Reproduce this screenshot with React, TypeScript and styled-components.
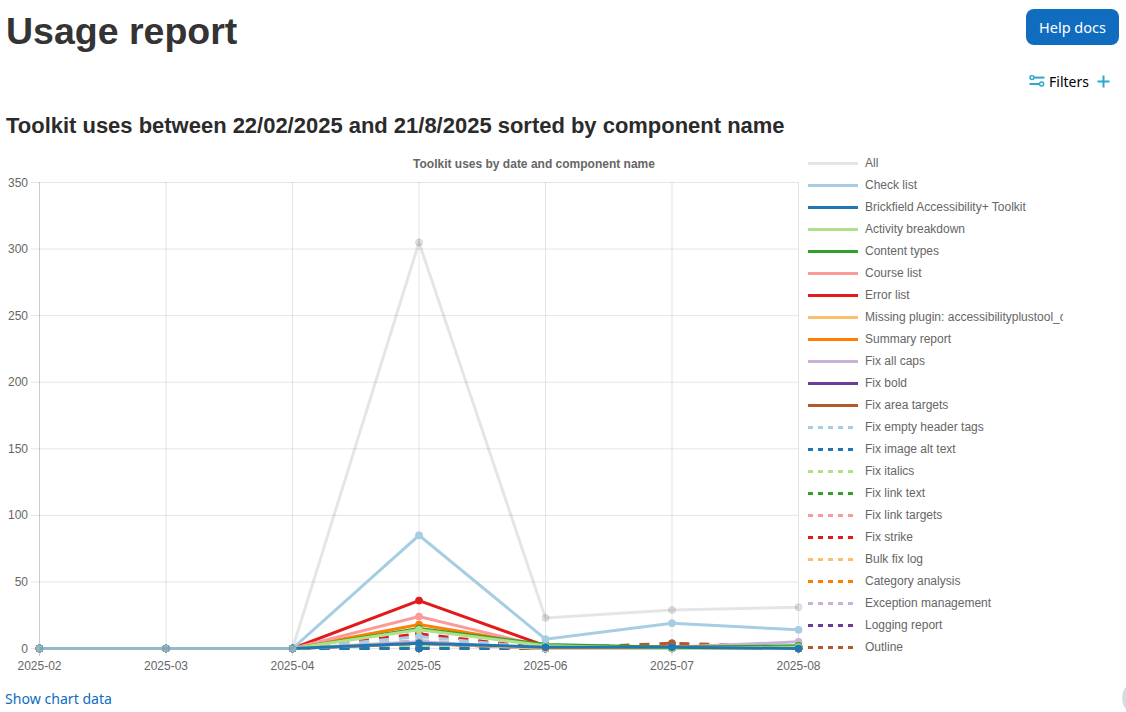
import { FC } from 'react'
import styled, { createGlobalStyle } from 'styled-components'

const GlobalStyle = createGlobalStyle`
html, body {
  margin: 0;
  padding: 0;
  background: #fff;
  overflow: hidden;
}
body {
  font-family: "Noto Sans", "Open Sans", sans-serif;
}
`

const Page = styled.main`
  height: 712px;
  padding: 9px 7px 0 6px;
  box-sizing: border-box;
`
const Header = styled.header`
  display: flex;
  justify-content: space-between;
  align-items: flex-start;
  height: 57px;
`
const Title = styled.h1`
  margin: 0;
  font: bold 37.5px/44px "Liberation Sans", Arial, sans-serif;
  color: #343434;
`
const HelpButton = styled.a`
  display: flex;
  align-items: center;
  justify-content: center;
  width: 93px;
  height: 36px;
  border-radius: 8px;
  background: #0f6cbf;
  color: #fff;
  font-size: 14.5px;
`
const FilterRow = styled.div`
  display: flex;
  justify-content: flex-end;
  align-items: center;
  height: 30px;
  padding-right: 9px;
  gap: 4px;
`
const FilterLabel = styled.span`
  font-size: 14px;
  color: #000;
  margin-right: 4px;
`
const Subtitle = styled.h2`
  margin: 15px 0 0;
  font: bold 21.98px/30px "Liberation Sans", Arial, sans-serif;
  color: #2b2b2b;
`
const Figure = styled.figure`
  margin: 11px 0 0 -6px;
  width: 1063px;
  display: grid;
  grid-template-columns: 803px 260px;
  grid-template-rows: 22px 510px;
`
const ChartTitle = styled.figcaption`
  grid-column: 1 / 3;
  grid-row: 1;
  padding-left: 5px;
  text-align: center;
  font: bold 12px/24px "Liberation Sans", Arial, sans-serif;
  color: #666;
`
const Plot = styled.svg`
  grid-column: 1;
  grid-row: 2;
  display: block;
  overflow: visible;
`
const Legend = styled.ul`
  grid-column: 2;
  grid-row: 1 / 3;
  list-style: none;
  margin: 0;
  padding: 0 0 0 5px;
  overflow: hidden;
`
const LegendItem = styled.li`
  display: flex;
  align-items: center;
  height: 22px;
  gap: 7px;
  white-space: nowrap;
  font: 12px/22px "Liberation Sans", Arial, sans-serif;
  color: #666;
`
const Swatch = styled.svg`
  flex: none;
  display: block;
  width: 50px;
  height: 3px;
  margin-top: 1px;
`
const DataLink = styled.a`
  display: block;
  margin-top: 4px;
  margin-left: -1px;
  font-size: 14.1px;
  line-height: 22px;
  color: #0f6cbf;
`
const HelpBubble = styled.div`
  position: fixed;
  left: 1122px;
  top: 680px;
  width: 36px;
  height: 36px;
  border-radius: 50%;
  background: #d8dce2;
`

type Series = { name: string; color: string; dashed?: boolean; data: number[] }

const series: Series[] = [
  { name: 'All', color: 'rgba(0,0,0,0.1)', data: [0, 0, 0, 305, 23, 29, 31] },
  { name: 'Check list', color: '#a6cee3', data: [0, 0, 0, 85, 7, 19, 14] },
  { name: 'Brickfield Accessibility+ Toolkit', color: '#1f78b4', data: [0, 0, 0, 4, 1, 1, 0] },
  { name: 'Activity breakdown', color: '#b2df8a', data: [0, 0, 0, 14, 2, 0, 1] },
  { name: 'Content types', color: '#33a02c', data: [0, 0, 0, 15, 3, 1, 2] },
  { name: 'Course list', color: '#fb9a99', data: [0, 0, 0, 24, 1, 1, 1] },
  { name: 'Error list', color: '#e31a1c', data: [0, 0, 0, 36, 2, 1, 1] },
  { name: 'Missing plugin: accessibilityplustool_checklist', color: '#fdbf6f', data: [0, 0, 0, 4, 0, 0, 0] },
  { name: 'Summary report', color: '#ff7f00', data: [0, 0, 0, 18, 2, 1, 1] },
  { name: 'Fix all caps', color: '#cab2d6', data: [0, 0, 0, 5, 0, 1, 5] },
  { name: 'Fix bold', color: '#6a3d9a', data: [0, 0, 0, 4, 0, 0, 0] },
  { name: 'Fix area targets', color: '#b15928', data: [0, 0, 0, 4, 0, 1, 1] },
  { name: 'Fix empty header tags', color: '#a6cee3', dashed: true, data: [0, 0, 0, 9, 0, 1, 1] },
  { name: 'Fix image alt text', color: '#1f78b4', dashed: true, data: [0, 0, 0, 0, 0, 0, 0] },
  { name: 'Fix italics', color: '#b2df8a', dashed: true, data: [0, 0, 0, 2, 0, 0, 0] },
  { name: 'Fix link text', color: '#33a02c', dashed: true, data: [0, 0, 0, 3, 0, 0, 0] },
  { name: 'Fix link targets', color: '#fb9a99', dashed: true, data: [0, 0, 0, 2, 0, 0, 0] },
  { name: 'Fix strike', color: '#e31a1c', dashed: true, data: [0, 0, 0, 11, 0, 1, 0] },
  { name: 'Bulk fix log', color: '#fdbf6f', dashed: true, data: [0, 0, 0, 0, 0, 0, 0] },
  { name: 'Category analysis', color: '#ff7f00', dashed: true, data: [0, 0, 0, 0, 0, 0, 0] },
  { name: 'Exception management', color: '#cab2d6', dashed: true, data: [0, 0, 0, 6, 0, 0, 1] },
  { name: 'Logging report', color: '#6a3d9a', dashed: true, data: [0, 0, 0, 0, 0, 0, 0] },
  { name: 'Outline', color: '#b15928', dashed: true, data: [0, 0, 0, 0, 0, 4, 1] },
]

const months = ['2025-02', '2025-03', '2025-04', '2025-05', '2025-06', '2025-07', '2025-08']
const ticks = [0, 50, 100, 150, 200, 250, 300, 350]
const grid = 'rgba(0,0,0,0.1)'

// plot coordinates, svg starts 174px down the page
const xAt = (i: number) => 39.5 + i * 126.5
const yAt = (v: number) => 474.5 - (v / 350) * 466

const FilterIcon: FC = () => (
  <svg width="16" height="12" viewBox="0 0 16 12" fill="none" stroke="#2ea6ce" strokeWidth="1.5">
    <circle cx="3" cy="2.6" r="2" />
    <path d="M5 2.6h10.5" strokeWidth="2" />
    <circle cx="12.6" cy="9" r="2" />
    <path d="M.5 9h10" strokeWidth="2" />
  </svg>
)

const PlusIcon: FC = () => (
  <svg width="13" height="13" viewBox="0 0 13 13" stroke="#2ea6ce" strokeWidth="2">
    <path d="M6.5.5v12M.5 6.5h12" />
  </svg>
)

const Chart: FC = () => (
  <Plot width="803" height="510" viewBox="0 0 803 510">
    {ticks.map((t) => (
      <g key={t}>
        <line x1="31" x2="798.5" y1={yAt(t)} y2={yAt(t)} stroke={grid} />
        <text x="28" y={yAt(t) + 4} textAnchor="end" fontFamily="Liberation Sans" fontSize="12" fill="#666">
          {t}
        </text>
      </g>
    ))}
    {months.map((m, i) => (
      <g key={m}>
        <line x1={xAt(i)} x2={xAt(i)} y1="8" y2="482" stroke={grid} />
        <text x={xAt(i)} y="496" textAnchor="middle" fontFamily="Liberation Sans" fontSize="12" fill="#666">
          {m}
        </text>
      </g>
    ))}
    <line x1="39.5" x2="39.5" y1="8" y2="482" stroke={grid} />
    {[...series].reverse().map((s) => (
      <g key={s.name}>
        <polyline
          points={s.data.map((v, i) => `${xAt(i)},${yAt(v)}`).join(' ')}
          fill="none"
          stroke={s.color}
          strokeWidth="3"
          strokeDasharray={s.dashed ? '10 10' : undefined}
        />
        {s.data.map((v, i) => (
          <circle key={i} cx={xAt(i)} cy={yAt(v)} r="3.5" fill={s.color} stroke={s.color} strokeWidth="1" />
        ))}
      </g>
    ))}
  </Plot>
)

export default function App() {
  return (
    <Page>
      <GlobalStyle />
      <Header>
        <Title>Usage report</Title>
        <HelpButton>Help docs</HelpButton>
      </Header>
      <FilterRow>
        <FilterIcon />
        <FilterLabel>Filters</FilterLabel>
        <PlusIcon />
      </FilterRow>
      <Subtitle>Toolkit uses between 22/02/2025 and 21/8/2025 sorted by component name</Subtitle>
      <Figure>
        <ChartTitle>Toolkit uses by date and component name</ChartTitle>
        <Chart />
        <Legend>
          {series.map((s) => (
            <LegendItem key={s.name}>
              <Swatch viewBox="0 0 50 3">
                <line
                  x1="0"
                  x2="50"
                  y1="1.5"
                  y2="1.5"
                  stroke={s.color}
                  strokeWidth="3"
                  strokeDasharray={s.dashed ? '5 5' : undefined}
                />
              </Swatch>
              {s.name}
            </LegendItem>
          ))}
        </Legend>
      </Figure>
      <DataLink>Show chart data</DataLink>
      <HelpBubble />
    </Page>
  )
}
